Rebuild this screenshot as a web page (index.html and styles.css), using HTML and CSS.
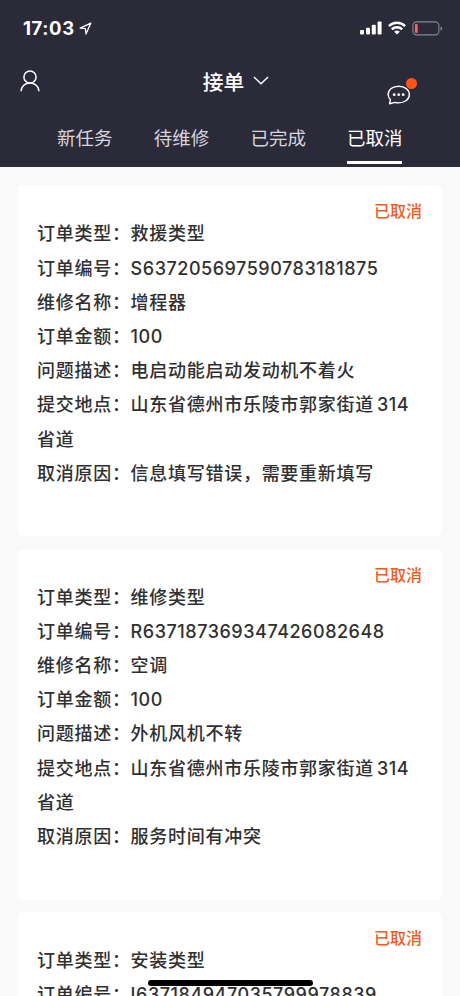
FILE: index.html
```html
<!DOCTYPE html>
<html lang="zh-CN">
<head>
<meta charset="utf-8">
<title>接单</title>
<link rel="stylesheet" href="styles.css">
</head>
<body>
<div class="screen">
  <header class="header">
    <div class="status">
      <span class="time">17:03</span>
      <svg class="locate" width="13" height="13" viewBox="0 0 13 13"><path d="M1.1 6.1 11.8 1.1 7 12 6.4 6.7Z"/></svg>
      <div class="indicators">
        <svg width="22" height="14" viewBox="0 0 22 14" fill="#fff"><rect x="0" y="9" width="4" height="4.6" rx="1"/><rect x="6" y="6.8" width="4" height="6.8" rx="1"/><rect x="11.8" y="3.8" width="4" height="9.8" rx="1"/><rect x="17.6" y="0.6" width="4" height="13" rx="1"/></svg>
        <svg width="18" height="14" viewBox="0 0 18 14" fill="none" stroke="#fff" stroke-width="2.4"><path d="M.9 5.1a11.6 11.6 0 0 1 16.2 0M3.8 8.4a7.4 7.4 0 0 1 10.4 0"/><path d="M6.2 10.8a4 4 0 0 1 5.6 0L9 13.6Z" fill="#fff" stroke="none"/></svg>
        <svg width="31" height="15" viewBox="0 0 31 15"><rect x=".9" y=".9" width="26" height="13" rx="3.8" fill="none" stroke="#888693" stroke-width="1.1"/><path d="M28.5 5.2q1.6.5 1.6 2.3t-1.6 2.3Z" fill="#888693"/><rect x="2.9" y="2.9" width="2.8" height="9" rx="1" fill="#ef6a60"/></svg>
      </div>
    </div>
    <div class="nav">
      <svg class="user" width="20" height="22" viewBox="0 0 20 22"><circle cx="10" cy="7" r="6.1"/><path d="M1.1 21.2c.2-5 4-8.2 8.9-8.2s8.7 3.2 8.9 8.2"/></svg>
      <div class="title"><span>接单</span><svg width="16" height="9" viewBox="0 0 16 9"><path d="M.9 1 8 7.7 15.1 1"/></svg></div>
      <div class="chat">
        <svg width="24" height="20" viewBox="0 0 24 20"><path d="M2.6 18.7 3.4 14.7C1.9 13.2 1.1 11.4 1.1 9.6 1.1 4.7 5.7 1.2 11.7 1.2s10.7 3.6 10.7 8.4-4.7 8.3-10.7 8.3c-1.4 0-2.6-.1-3.8-.5Z"/><g fill="#fff" stroke="none"><circle cx="7.2" cy="9.7" r="1.4"/><circle cx="11.7" cy="9.7" r="1.4"/><circle cx="16.2" cy="9.7" r="1.4"/></g></svg>
        <i class="dot"></i>
      </div>
    </div>
    <nav class="tabs">
      <span class="tab">新任务</span><span class="tab">待维修</span><span class="tab">已完成</span><span class="tab active">已取消</span>
    </nav>
  </header>
  <main class="list">
    <section class="card">
      <div class="state">已取消</div>
      <p>订单类型：救援类型</p>
      <p>订单编号：<span class="num">S637205697590783181875</span></p>
      <p>维修名称：增程器</p>
      <p>订单金额：<span class="num">100</span></p>
      <p>问题描述：电启动能启动发动机不着火</p>
      <p>提交地点：山东省德州市乐陵市郭家街道<span class="num road">314</span></p>
      <p>省道</p>
      <p>取消原因：信息填写错误，需要重新填写</p>
    </section>
    <section class="card">
      <div class="state">已取消</div>
      <p>订单类型：维修类型</p>
      <p>订单编号：<span class="num">R637187369347426082648</span></p>
      <p>维修名称：空调</p>
      <p>订单金额：<span class="num">100</span></p>
      <p>问题描述：外机风机不转</p>
      <p>提交地点：山东省德州市乐陵市郭家街道<span class="num road">314</span></p>
      <p>省道</p>
      <p>取消原因：服务时间有冲突</p>
    </section>
    <section class="card">
      <div class="state">已取消</div>
      <p>订单类型：安装类型</p>
      <p>订单编号：<span class="num">I637184947035799978839</span></p>
    </section>
  </main>
  <div class="home"></div>
</div>
</body>
</html>
```
FILE: styles.css
```css
* { box-sizing: border-box; }
body { margin: 0; }
.screen {
  position: relative;
  width: 460px;
  height: 996px;
  overflow: hidden;
  background: #f9f9f9;
  color: #303030;
  font-family: "Noto Sans CJK SC", sans-serif;
}
.header {
  height: 167px;
  background: #2b2a39;
  color: #fff;
}
.status {
  display: flex;
  align-items: center;
  height: 56px;
  padding: 0 17px 0 23px;
}
.time {
  font: 700 18.5px/24px Inter, sans-serif;
  letter-spacing: .6px;
  width: 52px;
  white-space: nowrap;
}
.locate { margin-left: 4px; fill: none; stroke: #fff; stroke-width: 1.3; stroke-linejoin: round; }
.indicators { display: flex; align-items: center; gap: 6px; margin-left: auto; }
.nav {
  display: grid;
  grid-template-columns: 100px 1fr 100px;
  height: 56px;
}
.user { margin: 14px 0 0 20px; fill: none; stroke: #fff; stroke-width: 1.5; }
.title {
  display: flex;
  justify-content: center;
  align-items: center;
  gap: 9px;
  height: 49px;
  padding-left: 12px;
  font-size: 20.8px;
  font-weight: 500;
}
.title svg { fill: none; stroke: #fff; stroke-width: 1.4; }
.chat { position: relative; margin: 29px 0 0 27px; width: 24px; height: 20px; }
.chat svg { display: block; fill: none; stroke: #fff; stroke-width: 1.4; stroke-linejoin: round; }
.dot {
  position: absolute;
  left: 18.5px;
  top: -7px;
  width: 11px;
  height: 11px;
  border-radius: 50%;
  background: #ff5416;
}
.tabs {
  display: flex;
  gap: 41.7px;
  height: 53px;
  padding-left: 57px;
}
.tab {
  width: 55px;
  height: 53px;
  font-size: 18.5px;
  line-height: 51px;
  white-space: nowrap;
  color: #d6d5df;
}
.tab.active { height: 52px; border-bottom: 3px solid #fff; color: #fff; }
.list { padding: 18.4px 18px 0; }
.card {
  position: relative;
  height: 351px;
  margin-bottom: 12.3px;
  padding: 30px 19px 0;
  border-radius: 5px;
  background: #fff;
}
.card p {
  margin: 0;
  height: 34.2px;
  font-size: 18px;
  font-weight: 500;
  line-height: 34.2px;
  letter-spacing: .72px;
  white-space: nowrap;
}
.num { font-family: Inter, sans-serif; font-weight: 550; line-height: 1; letter-spacing: .53px; }
.road { margin-left: 3px; }
.state {
  position: absolute;
  right: 20px;
  top: 13px;
  font-size: 16px;
  line-height: 24px;
  font-weight: 500;
  color: #f25b22;
}
.home {
  position: absolute;
  left: 148px;
  top: 980px;
  width: 165px;
  height: 6px;
  border-radius: 3px;
  background: #000;
}
```
